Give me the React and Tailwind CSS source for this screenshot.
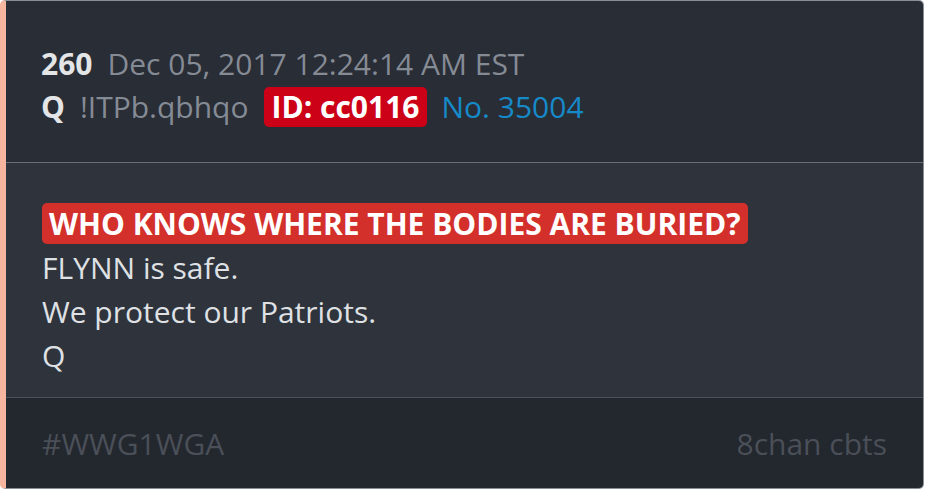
export default function App() {
  return (
    <div className="w-[926px] h-[490px] bg-white" style={{ fontFamily: '"Open Sans", sans-serif' }}>
      <div className="w-[924px] h-[489px] flex flex-col rounded-[5px] overflow-hidden border border-[#8a8f97] border-l-[6px] border-l-[#f6b59f]">
        <div className="h-[161px] bg-[#292d35] pl-[35px] pt-[41px] text-[30px] leading-[43px]">
          <div className="flex items-center gap-[15px]">
            <span className="font-bold text-[#e4e5e7]">260</span>
            <span className="text-[#858b95]">Dec 05, 2017 12:24:14 AM EST</span>
          </div>
          <div className="flex items-center">
            <span className="font-bold text-[#e4e5e7]">Q</span>
            <span className="ml-[15px] text-[#858b95]">!ITPb.qbhqo</span>
            <span className="ml-[15px] bg-[#cc0017] text-white font-bold rounded-[5px] px-[8px] leading-[40px]">ID: cc0116</span>
            <span className="ml-[14px] text-[#168ac9]">No. 35004</span>
          </div>
        </div>
        <div className="h-px bg-[#6a6f77]" />
        <div className="flex-1 bg-[#2e333c] pl-[36px] pt-[39px] text-[30px] leading-[44px] text-[#dfe1e4]">
          <div>
            <span className="bg-[#d3302c] text-white font-bold rounded-[5px] px-[7px]">WHO KNOWS WHERE THE BODIES ARE BURIED?</span>
          </div>
          <div>FLYNN is safe.</div>
          <div>We protect our Patriots.</div>
          <div>Q</div>
        </div>
        <div className="h-px bg-[#4c515a]" />
        <div className="h-[90px] bg-[#23272e] pl-[36px] pr-[36px] flex items-center justify-between text-[30px] text-[#4a4f58]">
          <span>#WWG1WGA</span>
          <span>8chan cbts</span>
        </div>
      </div>
    </div>
  );
}
